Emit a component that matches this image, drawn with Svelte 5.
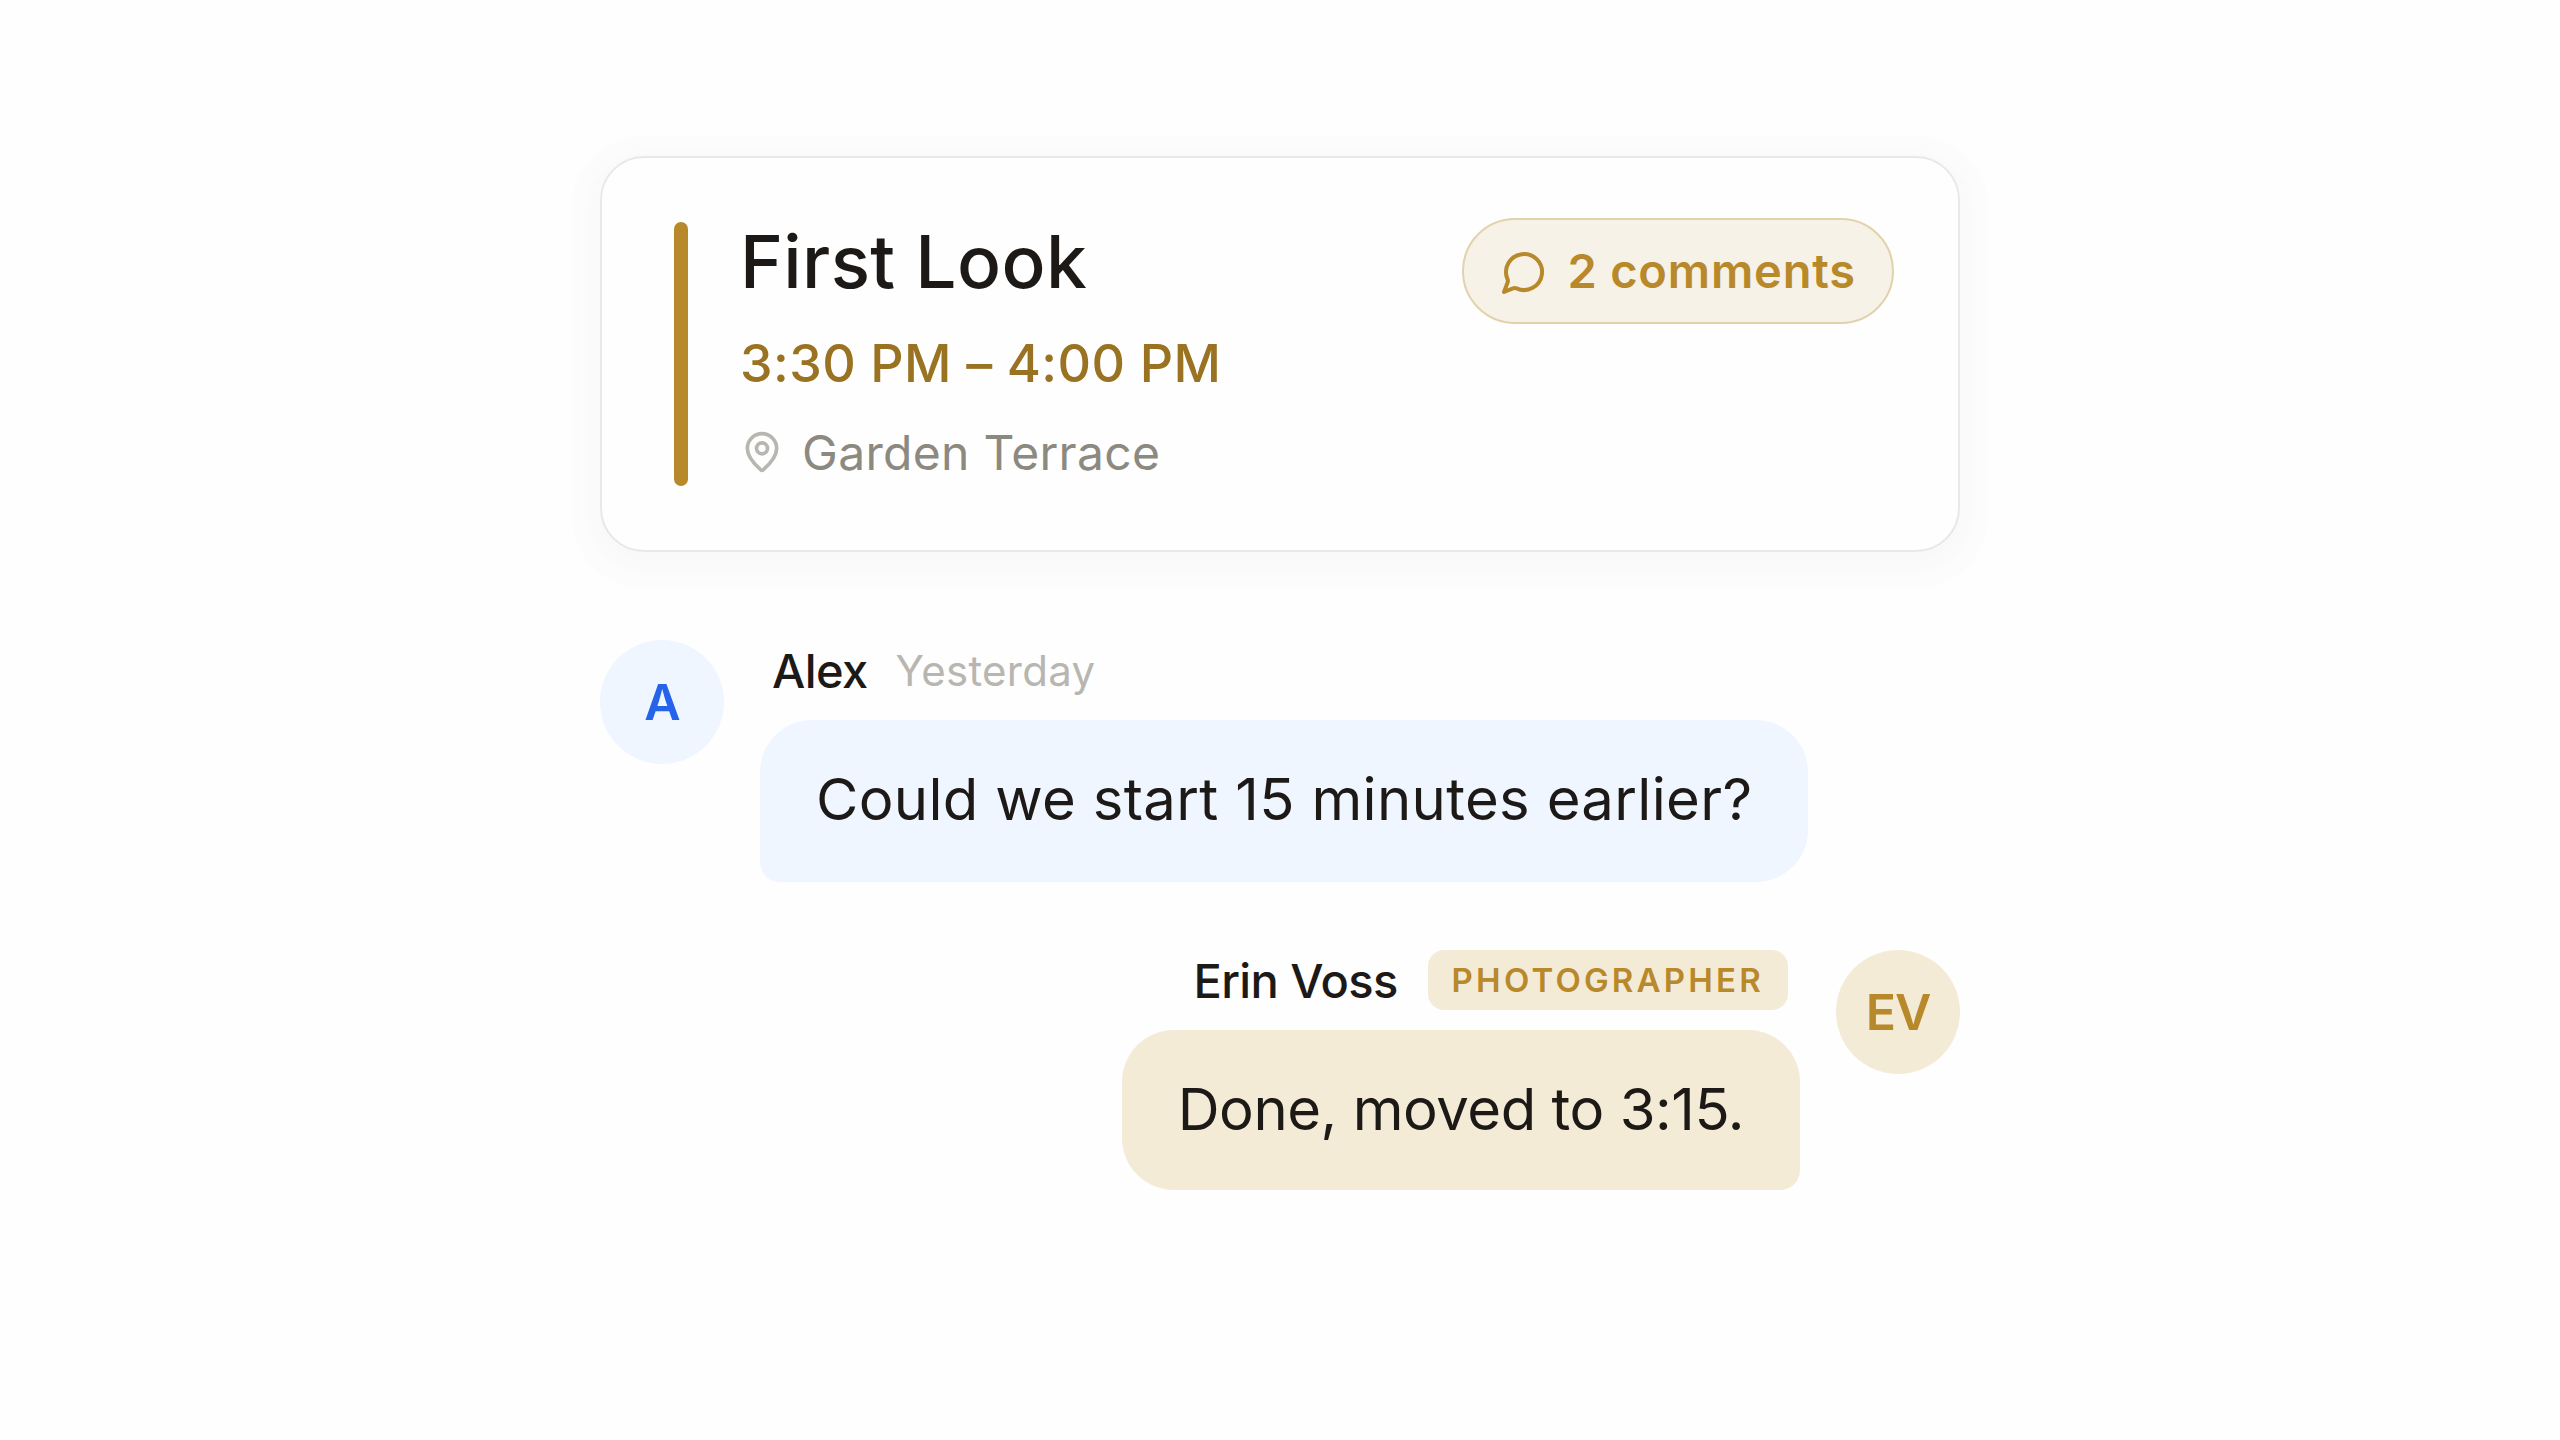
<script>
  const event = {
    title: 'First Look',
    time: '3:30 PM – 4:00 PM',
    location: 'Garden Terrace',
    comments: 2,
  }

  const messages = [
    { side: 'in', initials: 'A', name: 'Alex', when: 'Yesterday', text: 'Could we start 15 minutes earlier?' },
    { side: 'out', initials: 'EV', name: 'Erin Voss', role: 'Photographer', text: 'Done, moved to 3:15.' },
  ]
</script>

<main class="thread">
  <section class="card">
    <div class="bar"></div>
    <div class="info">
      <h1>{event.title}</h1>
      <p class="time">{event.time}</p>
      <p class="location">
        <svg class="pin" viewBox="0 0 24 24" aria-hidden="true">
          <path d="M20 10c0 4.993-5.539 10.193-7.399 11.799a1 1 0 0 1-1.202 0C9.539 20.193 4 14.993 4 10a8 8 0 0 1 16 0" />
          <circle cx="12" cy="10" r="3" />
        </svg>
        <span>{event.location}</span>
      </p>
    </div>
    <button class="pill">
      <svg class="chat" viewBox="0 0 48 48" aria-hidden="true">
        <path d="M4 45 7.5 35.8Q8.3 33.8 7.5 32.1A18 18 0 1 1 16.6 41.4Q14.8 40.7 12.9 41.4Z" />
      </svg>
      <span>{event.comments} comments</span>
    </button>
  </section>

  {#each messages as msg}
    <article class="message {msg.side}">
      <div class="avatar">{msg.initials}</div>
      <div class="body">
        <header>
          <span class="name">{msg.name}</span>
          {#if msg.when}
            <span class="when">{msg.when}</span>
          {/if}
          {#if msg.role}
            <span class="role">{msg.role}</span>
          {/if}
        </header>
        <p class="bubble">{msg.text}</p>
      </div>
    </article>
  {/each}
</main>

<style>
  :global(body) {
    background: #fefefe;
  }
  .thread {
    width: 1360px;
    margin: 0 auto;
    padding-top: 156px;
    font-family: Inter, 'Liberation Sans', sans-serif;
    line-height: normal;
    color: #1c1917;
  }
  h1, p { margin: 0; }

  /* event card */
  .card {
    display: flex;
    align-items: flex-start;
    box-sizing: border-box;
    height: 396px;
    padding: 64px 64px 64px 72px;
    border: 2px solid #e9e8e4;
    border-radius: 44px;
    background: #fefefe;
    box-shadow:
      0 8px 12px rgba(0, 0, 0, 0.006),
      0 8px 3px 14px rgba(0, 0, 0, 0.009),
      0 8px 1px 29px rgba(0, 0, 0, 0.009);
  }
  .bar {
    width: 14px;
    height: 264px;
    border-radius: 7px;
    background: #b8892b;
  }
  .info {
    flex: 1;
    margin-left: 52px;
  }
  h1 {
    font-size: 73px;
    font-weight: 500;
    line-height: 79px;
    letter-spacing: 0.35px;
  }
  .time {
    margin-top: 32px;
    font-size: 52px;
    font-weight: 500;
    line-height: 61px;
    letter-spacing: 0.39px;
    color: #9a7322;
  }
  .location {
    display: flex;
    align-items: center;
    gap: 18px;
    margin-top: 29px;
    font-size: 48px;
    line-height: 59px;
    letter-spacing: 0.33px;
    color: #8c8981;
  }
  svg {
    flex-shrink: 0;
    fill: none;
    stroke-linecap: round;
    stroke-linejoin: round;
  }
  .pin {
    width: 44px;
    height: 44px;
    margin-bottom: 2px;
    stroke: #b8b6b0;
    stroke-width: 2;
  }
  .pill {
    display: flex;
    align-items: center;
    gap: 19px;
    box-sizing: border-box;
    height: 106px;
    margin-top: -4px;
    padding: 0 36px;
    border: 2px solid #e2d2ac;
    border-radius: 53px;
    background: #f7f2e7;
    font: inherit;
    font-size: 47px;
    font-weight: 600;
    letter-spacing: 0.83px;
    color: #b8892b;
    white-space: nowrap;
  }
  .pill span { padding-bottom: 1px; }
  .chat {
    width: 48px;
    height: 48px;
    stroke: #b8892b;
    stroke-width: 4;
  }

  /* messages */
  .message {
    display: flex;
    gap: 36px;
    margin-top: 68px;
  }
  .card + .message { margin-top: 88px; }
  .out { flex-direction: row-reverse; }
  .avatar {
    display: flex;
    align-items: center;
    justify-content: center;
    width: 124px;
    height: 124px;
    flex-shrink: 0;
    border-radius: 50%;
    font-size: 50px;
    font-weight: 600;
    letter-spacing: -1px;
  }
  .in .avatar { background: #eff6ff; color: #2563eb; }
  .out .avatar { background: #f4ebd7; color: #b8892b; }
  .body {
    display: flex;
    flex-direction: column;
    gap: 20px;
  }
  .in .body { align-items: flex-start; }
  .out .body { align-items: flex-end; }
  header {
    display: flex;
    align-items: center;
    gap: 28px;
    height: 60px;
    padding: 0 12px;
  }
  .name {
    padding-top: 1px;
    font-size: 47px;
    font-weight: 500;
    letter-spacing: -0.6px;
  }
  .out .name { margin-right: 2px; }
  .when {
    padding-top: 1px;
    font-size: 42px;
    letter-spacing: 0.3px;
    color: #b8b6b0;
  }
  .role {
    padding: 10px 24px;
    border-radius: 16px;
    background: #f4ebd7;
    font-size: 33px;
    font-weight: 600;
    letter-spacing: 3.2px;
    text-transform: uppercase;
    color: #b8892b;
  }
  .bubble {
    padding: 37px 56px 39px;
    border-radius: 52px;
    font-size: 58px;
    line-height: 84px;
    white-space: nowrap;
  }
  .in .bubble {
    padding-bottom: 41px;
    border-bottom-left-radius: 20px;
    background: #eff6ff;
    letter-spacing: 0.33px;
  }
  .out .bubble {
    border-bottom-right-radius: 20px;
    background: #f4ebd7;
    letter-spacing: -0.45px;
  }
</style>
